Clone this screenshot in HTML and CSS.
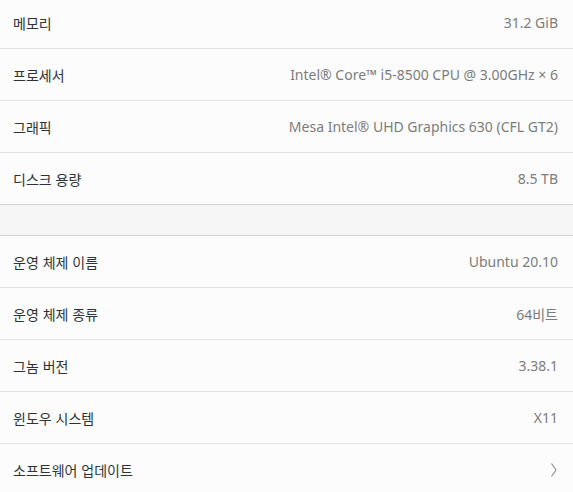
FILE: index.html
```html
<!DOCTYPE html>
<html lang="ko">
<head>
<meta charset="utf-8">
<link rel="stylesheet" href="styles.css">
</head>
<body>
<div class="page">
  <div class="list list-top">
    <div class="row"><span class="label">메모리</span><span class="value">31.2 GiB</span></div>
    <div class="row"><span class="label">프로세서</span><span class="value">Intel® Core™ i5-8500 CPU @ 3.00GHz × 6</span></div>
    <div class="row"><span class="label">그래픽</span><span class="value">Mesa Intel® UHD Graphics 630 (CFL GT2)</span></div>
    <div class="row"><span class="label">디스크 용량</span><span class="value">8.5 TB</span></div>
  </div>
  <div class="gap"></div>
  <div class="list">
    <div class="row"><span class="label">운영 체제 이름</span><span class="value">Ubuntu 20.10</span></div>
    <div class="row"><span class="label">운영 체제 종류</span><span class="value">64비트</span></div>
    <div class="row"><span class="label">그놈 버전</span><span class="value">3.38.1</span></div>
    <div class="row"><span class="label">윈도우 시스템</span><span class="value">X11</span></div>
    <div class="row"><span class="label">소프트웨어 업데이트</span>
      <svg class="chev" width="8" height="16" viewBox="0 0 8 16"><path d="M1.5 1.5 Q4 5 6 8 Q4 11 1.5 14.5" fill="none" stroke="#8a8a8a" stroke-width="1.1"/></svg>
    </div>
  </div>
</div>
</body>
</html>
```
FILE: styles.css
```css
html, body {
  margin: 0;
  padding: 0;
  background: #f6f6f6;
  overflow: hidden;
}
.page {
  width: 573px;
  height: 492px;
  overflow: hidden;
  font-family: "Noto Sans", "Noto Sans CJK KR", sans-serif;
  font-size: 14px;
}
.list {
  background: #fcfcfc;
  border-top: 1px solid #d3d3d3;
  border-bottom: 1px solid #d3d3d3;
}
.list-top {
  margin-top: -3px;
  border-top: none;
}
.gap {
  height: 30px;
}
.row {
  height: 51px;
  display: flex;
  align-items: center;
  justify-content: space-between;
  padding: 0 15px 0 13px;
  border-bottom: 1px solid #e2e2e2;
}
.row:last-child {
  border-bottom: none;
}
.label {
  color: #2e3436;
  font-family: "Noto Sans CJK KR", sans-serif;
}
.value {
  color: #7c7c7c;
}
.chev {
  display: block;
  margin-right: 0;
}
```
